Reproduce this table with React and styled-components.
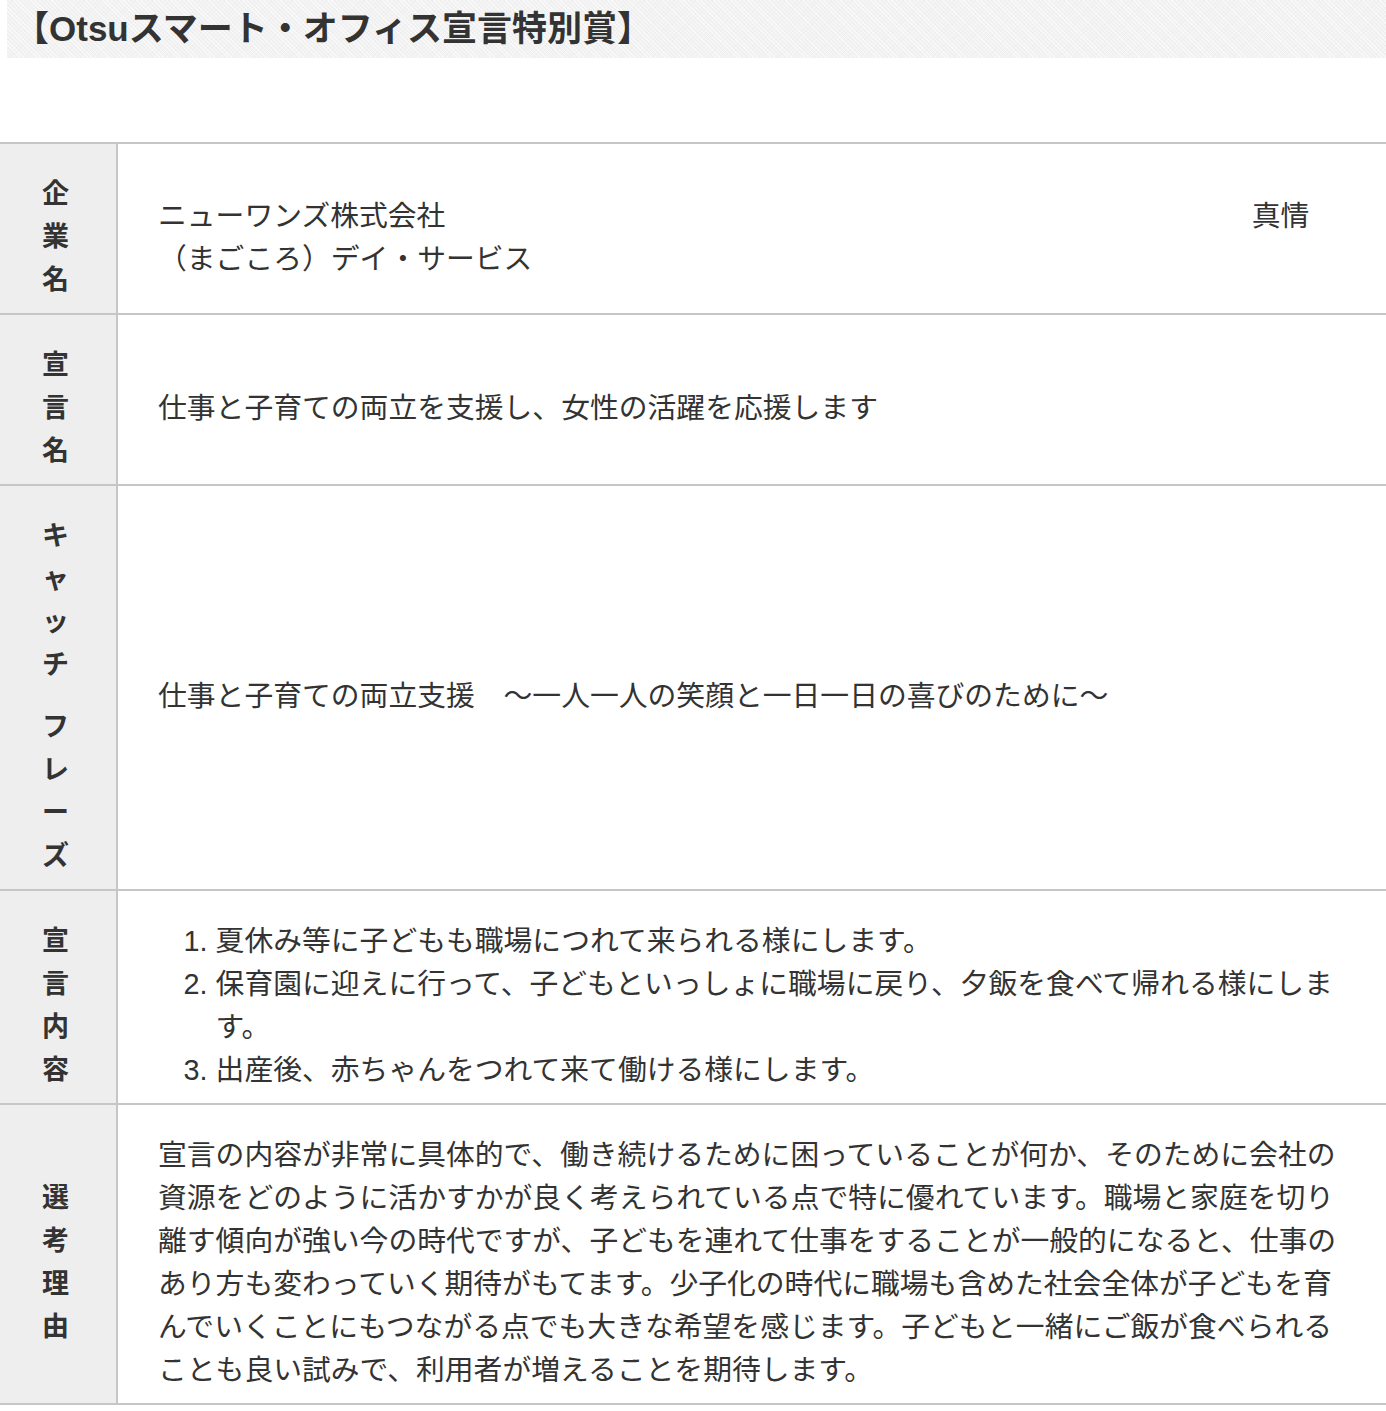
import React from "react";
import styled, { createGlobalStyle } from "styled-components";

const Global = createGlobalStyle`
  html, body { margin: 0; padding: 0; background: #fff; }
  body {
    font-family: "Liberation Sans", "Noto Sans CJK JP", sans-serif;
    color: #333;
  }
`;

const Page = styled.div`
  width: 1386px;
  display: flex;
  flex-direction: column;
`;

const TitleBar = styled.h2`
  margin: 0 0 84px 7px;
  height: 58px;
  display: flex;
  align-items: center;
  padding: 0 0 7px 7px;
  box-sizing: border-box;
  font-size: 35px;
  font-weight: 700;
  color: #333;
  background-color: #f2f2f2;
  background-image:
    repeating-linear-gradient(45deg, rgba(255,255,255,0.55) 0 1px, transparent 1px 3px),
    repeating-linear-gradient(-45deg, rgba(0,0,0,0.015) 0 1px, transparent 1px 3px);
`;

const Table = styled.div`
  display: grid;
  grid-template-columns: 118px 1fr;
  border-top: 2px solid #c6c6c6;
`;

const Head = styled.div`
  background: #eeeeee;
  border-right: 2px solid #c6c6c6;
  border-bottom: 2px solid #c6c6c6;
  padding: 29px 5px 11px 0;
  display: flex;
  flex-direction: column;
  justify-content: center;
  align-items: center;
  font-size: 27px;
  font-weight: 700;
  line-height: 43px;
`;

const Char = styled.span`
  display: block;
  height: ${(p) => (p.$space ? "19px" : "43px")};
`;

const Cell = styled.div`
  border-bottom: 2px solid #c6c6c6;
  padding: 29px 41px 11px 40px;
  display: flex;
  flex-direction: column;
  justify-content: center;
  font-size: 28.8px;
  line-height: 43px;
  color: #333;
`;

const Para = styled.p`
  margin: 0;
`;

const List = styled.ol`
  margin: 0;
  padding-left: 2em;
`;

const Item = styled.li`
  margin: 0;
`;

const Label = ({ text }) => (
  <Head>
    {Array.from(text).map((c, i) =>
      c === " " ? <Char key={i} $space /> : <Char key={i}>{c}</Char>
    )}
  </Head>
);

const sp = "\u3000".repeat(28);

export default function App() {
  return (
    <Page>
      <Global />
      <TitleBar>【Otsuスマート・オフィス宣言特別賞】</TitleBar>
      <Table>
        <Label text="企業名" />
        <Cell>
          <Para>{`ニューワンズ株式会社${sp}真情（まごころ）デイ・サービス`}</Para>
        </Cell>

        <Label text="宣言名" />
        <Cell>
          <Para>仕事と子育ての両立を支援し、女性の活躍を応援します</Para>
        </Cell>

        <Label text="キャッチ フレーズ" />
        <Cell>
          <Para>仕事と子育ての両立支援　～一人一人の笑顔と一日一日の喜びのために～</Para>
        </Cell>

        <Label text="宣言内容" />
        <Cell>
          <List>
            <Item>夏休み等に子どもも職場につれて来られる様にします。</Item>
            <Item>保育園に迎えに行って、子どもといっしょに職場に戻り、夕飯を食べて帰れる様にします。</Item>
            <Item>出産後、赤ちゃんをつれて来て働ける様にします。</Item>
          </List>
        </Cell>

        <Label text="選考理由" />
        <Cell>
          <Para>
            宣言の内容が非常に具体的で、働き続けるために困っていることが何か、そのために会社の資源をどのように活かすかが良く考えられている点で特に優れています。職場と家庭を切り離す傾向が強い今の時代ですが、子どもを連れて仕事をすることが一般的になると、仕事のあり方も変わっていく期待がもてます。少子化の時代に職場も含めた社会全体が子どもを育んでいくことにもつながる点でも大きな希望を感じます。子どもと一緒にご飯が食べられることも良い試みで、利用者が増えることを期待します。
          </Para>
        </Cell>
      </Table>
    </Page>
  );
}
